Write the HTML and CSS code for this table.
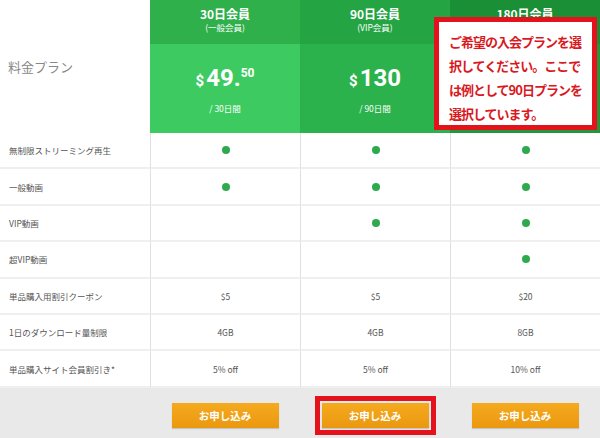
FILE: index.html
```html
<!DOCTYPE html>
<html lang="ja">
<head>
<meta charset="UTF-8">
<title>料金プラン</title>
<link rel="stylesheet" href="styles.css">
</head>
<body>
    <div class="pricing">
        <div class="plans">
            <div class="head-label">料金プラン</div>
            <div class="plan plan-1">
                <div class="plan-name">30日会員<span>(一般会員)</span></div>
                <div class="plan-price">
                    <div class="amount"><span class="cur">$</span>49.<sup>50</sup></div>
                    <div class="term">/ 30日間</div>
                </div>
            </div>
            <div class="plan plan-2">
                <div class="plan-name">90日会員<span>(VIP会員)</span></div>
                <div class="plan-price">
                    <div class="amount"><span class="cur">$</span>130</div>
                    <div class="term">/ 90日間</div>
                </div>
            </div>
            <div class="plan plan-3">
                <div class="plan-name">180日会員</div>
                <div class="plan-price"></div>
            </div>

            <div class="cell label">無制限ストリーミング再生</div>
            <div class="cell"><i class="dot"></i></div>
            <div class="cell"><i class="dot"></i></div>
            <div class="cell"><i class="dot"></i></div>

            <div class="cell label">一般動画</div>
            <div class="cell"><i class="dot"></i></div>
            <div class="cell"><i class="dot"></i></div>
            <div class="cell"><i class="dot"></i></div>

            <div class="cell label">VIP動画</div>
            <div class="cell"></div>
            <div class="cell"><i class="dot"></i></div>
            <div class="cell"><i class="dot"></i></div>

            <div class="cell label">超VIP動画</div>
            <div class="cell"></div>
            <div class="cell"></div>
            <div class="cell"><i class="dot"></i></div>

            <div class="cell label">単品購入用割引クーポン</div>
            <div class="cell">$5</div>
            <div class="cell">$5</div>
            <div class="cell">$20</div>

            <div class="cell label">1日のダウンロード量制限</div>
            <div class="cell">4GB</div>
            <div class="cell">4GB</div>
            <div class="cell">8GB</div>

            <div class="cell label">単品購入サイト会員割引き*</div>
            <div class="cell">5% off</div>
            <div class="cell">5% off</div>
            <div class="cell">10% off</div>

            <div class="foot"></div>
            <div class="foot"><button class="apply">お申し込み</button></div>
            <div class="foot"><button class="apply selected">お申し込み</button></div>
            <div class="foot"><button class="apply">お申し込み</button></div>
        </div>

        <div class="callout">ご希望の入会プランを選択してください。ここでは例として90日プランを選択しています。</div>
    </div>
</body>
</html>
```

FILE: styles.css
```css
body {
    margin: 0;
    background: #fff;
    font-family: "Noto Sans CJK JP", "Noto Sans", sans-serif;
    color: #555;
}
.pricing {
    position: relative;
    width: 600px;
    height: 438px;
    overflow: hidden;
}
.plans {
    display: grid;
    grid-template-columns: repeat(4, 150px);
    grid-template-rows: 133px repeat(7, 36.4px) 50px;
}
.head-label {
    display: flex;
    align-items: center;
    padding-left: 8px;
    font-size: 13px;
    color: #888;
}
.plan {
    display: flex;
    flex-direction: column;
    color: #fff;
    text-align: center;
}
.plan-name {
    height: 44px;
    box-sizing: border-box;
    padding-top: 5px;
    font-size: 12px;
    font-weight: bold;
    line-height: 17px;
}
.plan-name span {
    display: block;
    font-size: 8.5px;
    font-weight: normal;
    line-height: 10px;
}
.plan-price {
    flex: 1;
    padding-top: 19px;
    box-sizing: border-box;
}
.amount {
    font-family: Roboto, "Noto Sans", sans-serif;
    font-size: 24px;
    font-weight: bold;
    line-height: 30px;
}
.amount .cur {
    font-size: 15px;
    margin-right: 2px;
}
.amount sup {
    font-size: 12px;
    vertical-align: 9px;
    line-height: 0;
}
.term {
    font-size: 8.5px;
    margin-top: 6px;
}
.plan-1 .plan-name { background: #2fb04b; }
.plan-1 .plan-price { background: #3dcb61; }
.plan-2 .plan-name { background: #25a443; }
.plan-2 .plan-price { background: #2bb24c; }
.plan-3 .plan-name { background: #1b8f35; }
.plan-3 .plan-price { background: #22983c; }

.cell {
    display: flex;
    align-items: center;
    justify-content: center;
    font-size: 8.5px;
    color: #555;
    border-bottom: 2px solid #efefef;
    border-left: 1px solid #e0e0e0;
}
.cell.label {
    justify-content: flex-start;
    padding-left: 9px;
    border-left: none;
}
.dot {
    width: 8px;
    height: 8px;
    border-radius: 50%;
    background: #2ea94d;
}
.foot {
    display: flex;
    justify-content: center;
    align-items: flex-start;
    padding-top: 15px;
    background: #e9e9e9;
}
.apply {
    width: 107px;
    height: 25px;
    border: none;
    border-radius: 0;
    background: linear-gradient(#f5aa1e, #ea980f);
    box-shadow: 0 1px 1px rgba(0, 0, 0, 0.15);
    color: #fff;
    font-family: "Noto Sans CJK JP", sans-serif;
    font-size: 10.5px;
    font-weight: bold;
    cursor: pointer;
}
.apply.selected {
    outline: 5px solid #e3121c;
    outline-offset: 2px;
}
.callout {
    position: absolute;
    left: 434px;
    top: 17px;
    width: 163px;
    height: 113px;
    box-sizing: border-box;
    border: 5px solid #e3121c;
    background: #fff;
    padding: 8px 6px 0 10px;
    color: #d81a1f;
    font-size: 13px;
    font-weight: bold;
    line-height: 24px;
    letter-spacing: -1px;
}
```
